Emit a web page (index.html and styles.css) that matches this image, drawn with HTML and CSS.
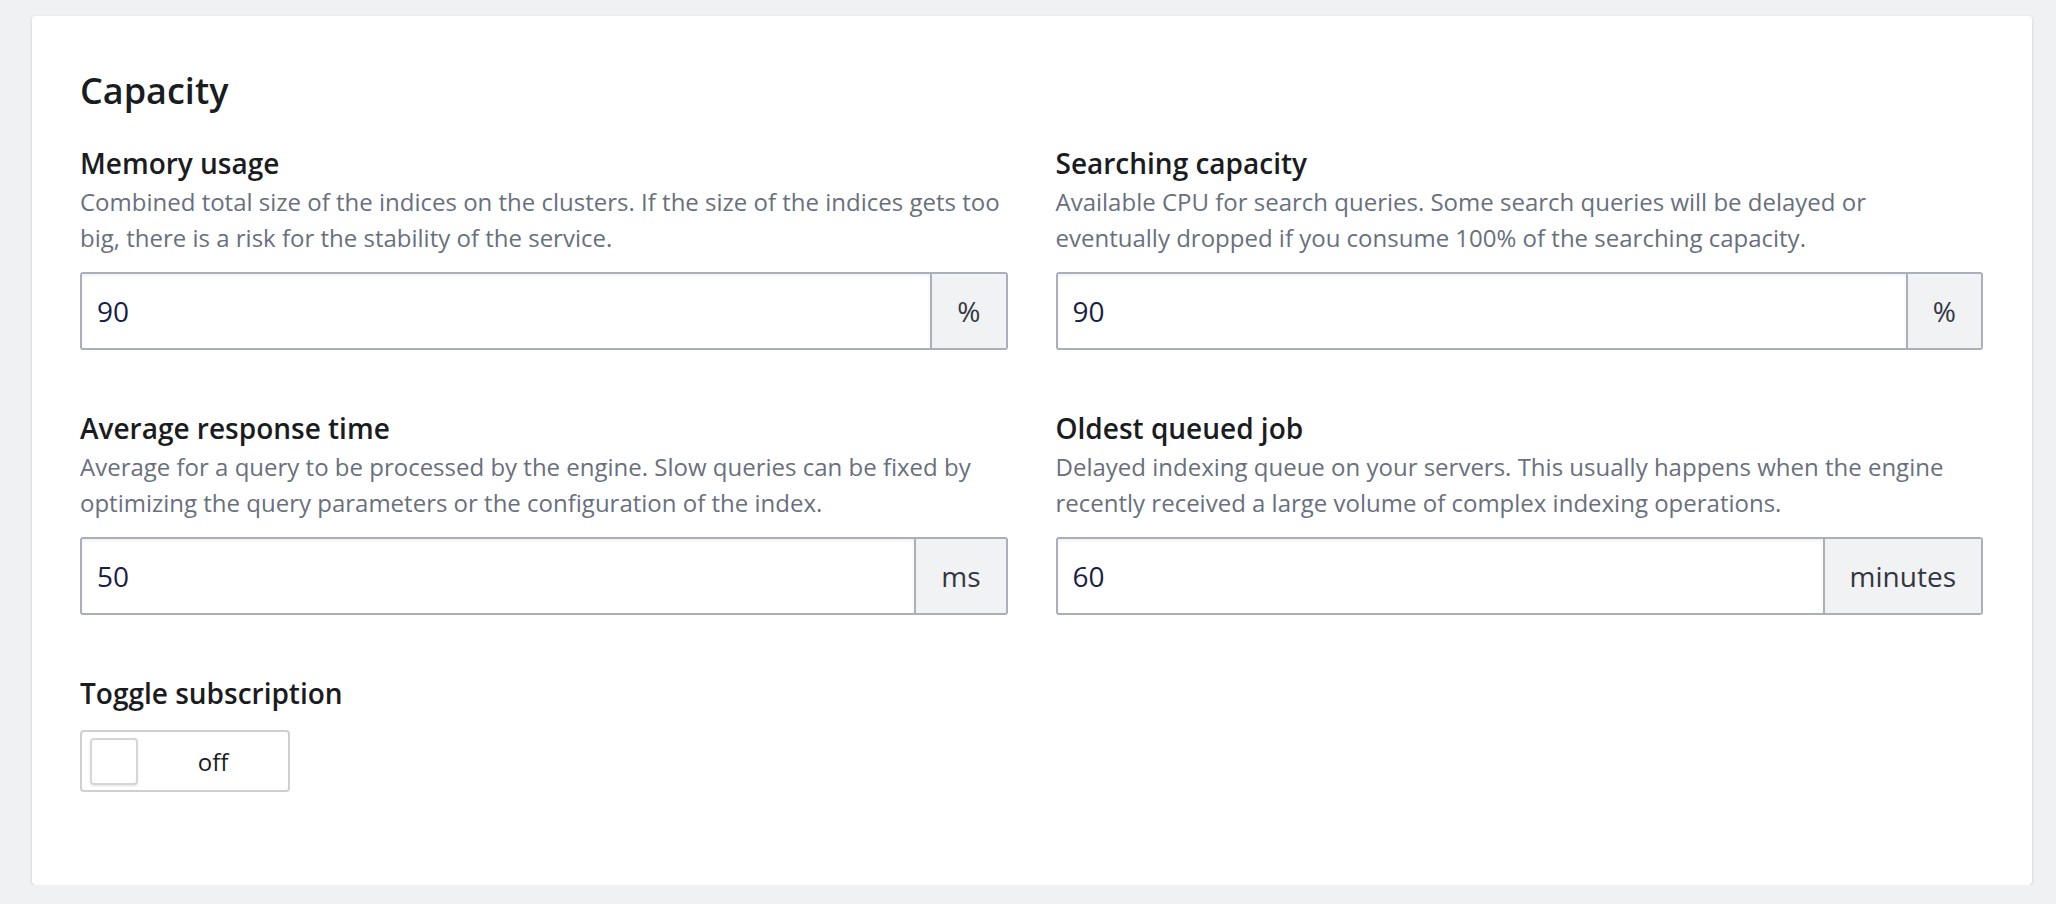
FILE: index.html
```html
<!DOCTYPE html>
<html lang="en">
<head>
  <meta charset="UTF-8" />
  <title>Capacity</title>
  <link rel="stylesheet" href="styles.css">
</head>
<body>
  <div class="panel">
    <h2 class="panel-title">Capacity</h2>

    <div class="fields">
      <div class="field">
        <div class="field-label">Memory usage</div>
        <p class="field-help">Combined total size of the indices on the clusters. If the size of the indices gets too big, there is a risk for the stability of the service.</p>
        <div class="input-group">
          <input type="text" class="input" value="90" />
          <span class="addon">%</span>
        </div>
      </div>

      <div class="field">
        <div class="field-label">Searching capacity</div>
        <p class="field-help">Available CPU for search queries. Some search queries will be delayed or eventually dropped if you consume 100% of the searching capacity.</p>
        <div class="input-group">
          <input type="text" class="input" value="90" />
          <span class="addon">%</span>
        </div>
      </div>

      <div class="field">
        <div class="field-label">Average response time</div>
        <p class="field-help">Average for a query to be processed by the engine. Slow queries can be fixed by optimizing the query parameters or the configuration of the index.</p>
        <div class="input-group">
          <input type="text" class="input" value="50" />
          <span class="addon">ms</span>
        </div>
      </div>

      <div class="field">
        <div class="field-label">Oldest queued job</div>
        <p class="field-help">Delayed indexing queue on your servers. This usually happens when the engine recently received a large volume of complex indexing operations.</p>
        <div class="input-group">
          <input type="text" class="input" value="60" />
          <span class="addon">minutes</span>
        </div>
      </div>

      <div class="field">
        <div class="field-label">Toggle subscription</div>
        <button class="toggle" type="button">
          <span class="toggle-knob"></span>
          <span class="toggle-text">off</span>
        </button>
      </div>
    </div>
  </div>
</body>
</html>
```

FILE: styles.css
```css
body {
  margin: 0;
  background: #f0f1f3;
  font-family: 'Open Sans', 'Liberation Sans', sans-serif;
  color: #1a1c21;
}

.panel {
  margin: 16px 24px 0 32px;
  width: 2000px;
  height: 869px;
  box-sizing: border-box;
  background: white;
  border-radius: 4px;
  box-shadow: 0 1px 3px rgba(0, 0, 0, 0.18);
  padding: 48px 49px 48px 48px;
}

.panel-title {
  margin: 0 0 24px;
  font-size: 36px;
  line-height: 54px;
  font-weight: 600;
}

.fields {
  display: grid;
  grid-template-columns: 1fr 1fr;
  column-gap: 48px;
  row-gap: 57px;
}

.field-label {
  font-size: 28px;
  line-height: 42px;
  font-weight: 600;
}

.field-help {
  margin: 0 0 16px;
  font-size: 24px;
  line-height: 36px;
  color: #69707d;
}

.input-group {
  display: flex;
  height: 78px;
  box-sizing: border-box;
  border: 2px solid #abafbc;
  border-radius: 3px;
  overflow: hidden;
}

.input {
  flex: 1;
  min-width: 0;
  border: none;
  padding: 0 15px;
  font-family: inherit;
  font-size: 28px;
  color: #1b1f45;
  background: white;
  box-shadow: inset 0 2px 3px rgba(0, 0, 0, 0.06);
  outline: none;
}

.addon {
  display: flex;
  align-items: center;
  justify-content: center;
  padding: 0 25px;
  border-left: 2px solid #abafbc;
  background: #f1f2f4;
  font-size: 28px;
  color: #343741;
}

.toggle {
  margin-top: 16px;
  display: flex;
  align-items: center;
  width: 210px;
  height: 62px;
  padding: 0 0 0 8px;
  border: 2px solid #cfcfcf;
  border-radius: 4px;
  background: white;
  font-family: inherit;
  cursor: pointer;
}

.toggle-knob {
  width: 48px;
  height: 47px;
  box-sizing: border-box;
  border: 2px solid #d6d6d6;
  border-radius: 4px;
  box-shadow: 0 1px 2px rgba(0, 0, 0, 0.12);
}

.toggle-text {
  flex: 1;
  text-align: center;
  font-size: 24px;
  color: #1a1c21;
}
```
